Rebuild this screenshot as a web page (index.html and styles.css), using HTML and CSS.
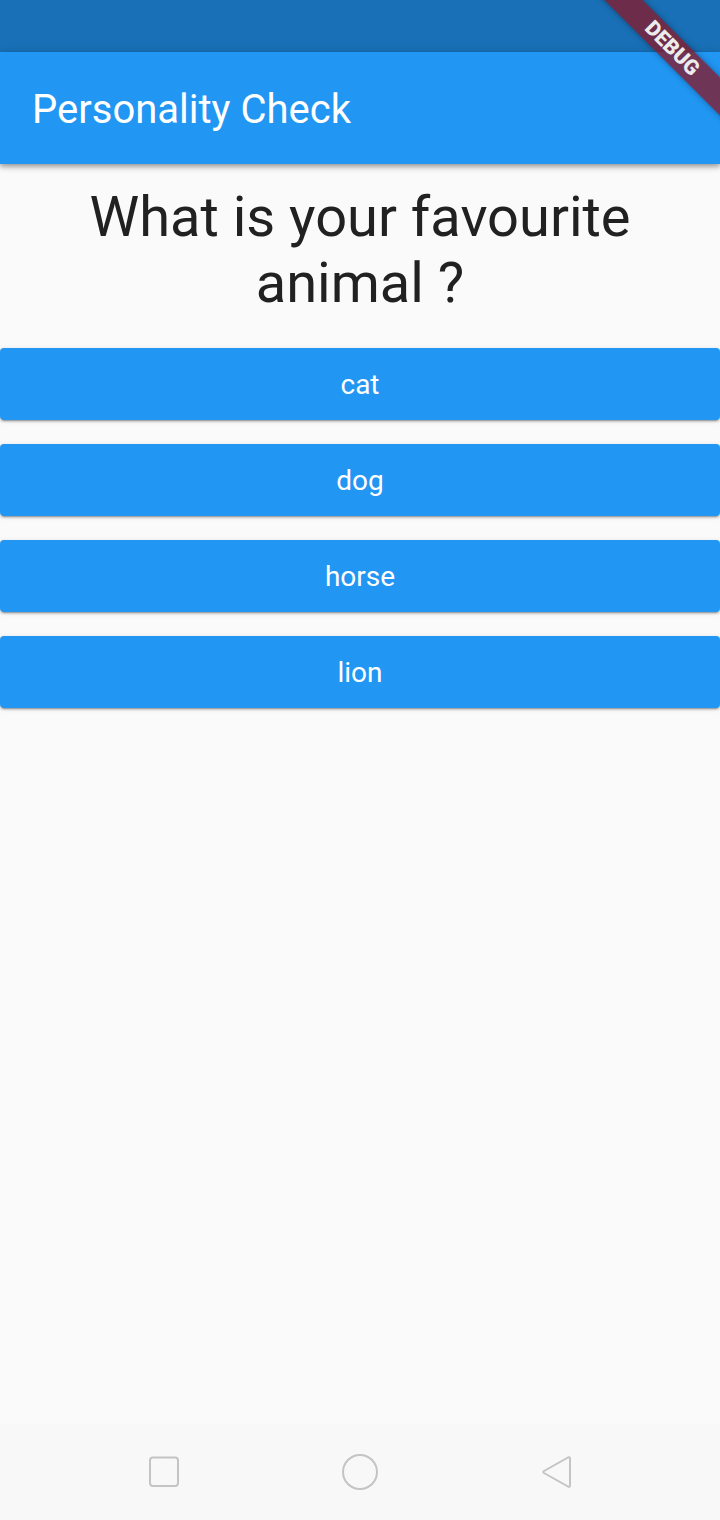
FILE: index.html
```html
<!DOCTYPE html>
<html>
<head>
<meta charset="utf-8">
<link rel="stylesheet" href="styles.css">
</head>
<body>
<div class="screen">
  <div class="status"></div>
  <header class="appbar"><h1 class="title">Personality Check</h1></header>
  <main class="content">
    <div class="question">What is your favourite animal ?</div>
    <div class="answers">
      <div class="tap"><button class="btn">cat</button></div>
      <div class="tap"><button class="btn">dog</button></div>
      <div class="tap"><button class="btn">horse</button></div>
      <div class="tap"><button class="btn">lion</button></div>
    </div>
  </main>
  <nav class="navbar">
    <svg class="nav-icon" width="40" height="40" viewBox="0 0 40 40"><rect x="6" y="5.5" width="28" height="28.5" rx="3" fill="none" stroke="#c4c4c4" stroke-width="2"/></svg>
    <svg class="nav-icon" width="40" height="40" viewBox="0 0 40 40"><circle cx="20" cy="20" r="17" fill="none" stroke="#c4c4c4" stroke-width="2"/></svg>
    <svg class="nav-icon" width="40" height="40" viewBox="0 0 40 40"><path d="M32 5.5 Q34 4.5 34 7 V33 Q34 35.5 32 34.5 L8 21 Q6.5 20 8 19 Z" fill="none" stroke="#c4c4c4" stroke-width="2" stroke-linejoin="round"/></svg>
  </nav>
  <div class="banner">DEBUG</div>
</div>
</body>
</html>
```
FILE: styles.css
```css
* { box-sizing: border-box; }
html, body { margin: 0; padding: 0; }
body { font-family: Roboto, "Noto Sans", sans-serif; background: #fafafa; }
.screen {
  position: relative;
  width: 720px;
  height: 1520px;
  overflow: hidden;
  display: flex;
  flex-direction: column;
  background: #fafafa;
}
.status { height: 52px; background: #1970b6; flex: none; }
.appbar {
  height: 112px;
  flex: none;
  background: #2196f3;
  display: flex;
  align-items: center;
  padding-left: 32px;
  padding-top: 4px;
  box-shadow: 0 4px 5px rgba(0,0,0,0.14), 0 1px 10px rgba(0,0,0,0.12), 0 2px 4px rgba(0,0,0,0.2);
  position: relative;
  z-index: 1;
}
.title {
  margin: 0;
  color: #fff;
  font-size: 40px;
  font-weight: 400;
  line-height: 1;
}
.content { flex: 1; }
.question {
  margin: 20px;
  text-align: center;
  font-size: 56px;
  line-height: 66px;
  color: #212121;
  padding: 0 40px;
}
.answers { display: flex; flex-direction: column; margin-top: 3px; }
.tap { padding: 12px 0; }
.btn {
  display: block;
  width: 100%;
  height: 72px;
  border: none;
  border-radius: 4px;
  background: #2196f3;
  color: #fff;
  font-family: Roboto, "Noto Sans", sans-serif;
  font-size: 28px;
  font-weight: 400;
  box-shadow: 0 3px 1px -2px rgba(0,0,0,0.2), 0 2px 2px 0 rgba(0,0,0,0.14), 0 1px 5px 0 rgba(0,0,0,0.12);
}
.navbar {
  height: 96px;
  flex: none;
  background: #f8f8f8;
  display: flex;
  justify-content: space-between;
  align-items: center;
  padding: 0 144px;
}
.nav-icon { display: block; }
.banner {
  position: absolute;
  left: 572px;
  top: 35px;
  width: 200px;
  height: 27px;
  transform: rotate(45deg);
  background: rgba(135, 22, 38, 0.76);
  color: #ececec;
  font-family: Roboto, "Noto Sans", sans-serif;
  font-weight: 900;
  font-size: 21px;
  line-height: 27px;
  text-align: center;
  box-shadow: 0 0 6px rgba(0,0,0,0.35);
  z-index: 5;
}
```
